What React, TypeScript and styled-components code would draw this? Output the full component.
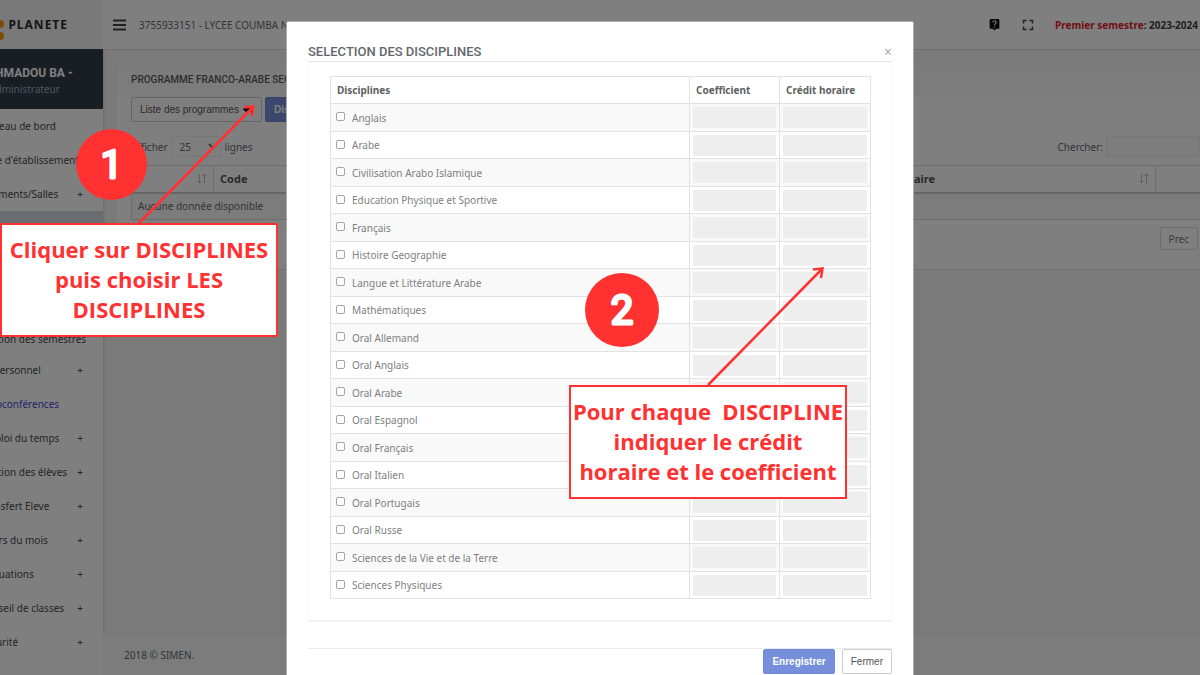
import React from "react";
import styled, { createGlobalStyle } from "styled-components";
import { MdFullscreen, MdLiveHelp } from "react-icons/md";
import { FaReply } from "react-icons/fa";

const RED = "#ff3131";
const SANS = '"Noto Sans", "Open Sans", sans-serif';

const GlobalStyle = createGlobalStyle`
  *, *::before, *::after { box-sizing: border-box; }
  body {
    margin: 0;
    font: 10px/14px ${SANS};
    color: #676a6c;
    background: #f4f4f4;
  }
  button, input, select { font: inherit; color: inherit; }
`;

const Viewport = styled.div`
  position: relative;
  min-height: 100vh;
  overflow: hidden;
`;

const Shell = styled.div`
  display: flex;
  min-height: 100vh;
  margin: 0 -40px 0 -80px;
`;

const Sidebar = styled.aside`
  flex: 0 0 183px;
  min-width: 0;
  background: #fff;
  box-shadow: 1px 0 2px rgba(0, 0, 0, 0.12);
`;

const Brand = styled.div`
  display: flex;
  align-items: center;
  justify-content: flex-end;
  gap: 4px;
  height: 49px;
  padding-right: 35px;
  background: #f2f2f2;
  color: #2b2b2b;
  font-size: 12px;
  font-weight: 700;
  letter-spacing: 1px;
`;

const Profile = styled.div`
  height: 60px;
  padding: 16px 0 0 26px;
  background: #323b48;
  line-height: 16px;
  text-align: center;
  color: #a3adb5;
`;

const ProfileName = styled.strong`
  display: block;
  font: 700 12px/16px Roboto, sans-serif;
  color: #fff;
`;

const Menu = styled.nav`
  display: flex;
  flex-direction: column;
`;

const MenuLink = styled.a<{ $active?: boolean; $accent?: boolean }>`
  display: flex;
  align-items: center;
  justify-content: space-between;
  height: 34px;
  padding: 0 20px 0 60px;
  white-space: nowrap;
  text-decoration: none;
  color: ${(p) => (p.$accent ? "#4a3fd0" : "#4a4a4a")};
  background: ${(p) => (p.$active ? "#d3dbe3" : "transparent")};
`;

const SubmenuLink = styled(MenuLink)`
  height: 28px;
`;

const Submenu = styled.div`
  display: flex;
  flex-direction: column;
  justify-content: flex-end;
  height: 108px;
`;

const Main = styled.main`
  flex: 1;
  display: flex;
  flex-direction: column;
  min-width: 0;
`;

const TopBar = styled.header`
  display: flex;
  align-items: center;
  height: 50px;
  padding: 0 42px 0 9px;
  background: #fff;
  border-bottom: 1px solid #dcdcdc;
`;

const IconButton = styled.button`
  display: flex;
  padding: 0;
  border: 0;
  background: none;
  color: #444;
`;

const School = styled.span`
  flex: 1;
  padding-left: 12px;
  white-space: nowrap;
`;

const TopTools = styled.div`
  display: flex;
  align-items: center;
  gap: 18px;
`;

const Term = styled.strong`
  color: #3e3e3e;
  font-size: 10px;
  em { color: #e21d2c; font-style: normal; }
`;

const Card = styled.section`
  margin: 15px 0 0 14px;
  background: #fff;
  border-bottom: 1px solid #e2e2e2;
`;

const CardTitle = styled.h1`
  margin: 0;
  padding: 7px 14px 9px;
  font: 500 10px/16px Roboto, sans-serif;
  color: #5a5a5a;
  background: #f8f8f8;
`;

const CardBody = styled.div`
  padding: 0 14px 19px;
`;

const Row = styled.div`
  display: flex;
  gap: 3px;
`;

const Button = styled.button<{ $primary?: boolean }>`
  display: inline-flex;
  align-items: center;
  gap: 4px;
  height: 25px;
  padding: 0 8px;
  border: 1px solid ${(p) => (p.$primary ? "#6f8ad8" : "#ccc")};
  border-radius: 2px;
  background: ${(p) => (p.$primary ? "#768fdb" : "#fff")};
  color: ${(p) => (p.$primary ? "#fff" : "#555")};
  font: ${(p) => (p.$primary ? 700 : 400)} 10px/14px "Liberation Sans", Arial, sans-serif;
  white-space: nowrap;
`;

const PageButton = styled(Button)`
  height: 23px;
  border-color: #ddd;
  color: #777;
  font-family: ${SANS};
`;

const Filters = styled.div`
  display: flex;
  justify-content: space-between;
  margin: 14px 26px 8px 0;
  label { display: flex; align-items: center; gap: 3px; }
`;

const LengthSelect = styled.select`
  width: 51px;
  height: 21px;
  padding: 0 4px;
  border: 1px solid #efefef;
  background: #fcfcfc;
`;

const SearchBox = styled.input`
  width: 94px;
  height: 21px;
  border: 1px solid #efefef;
  background: #fafafa;
`;

const DataTable = styled.table`
  width: 100%;
  border-collapse: collapse;
  table-layout: fixed;
  border: 1px solid #ddd;
  th, td { height: 27px; padding: 0 6px; text-align: left; }
  th { border: 1px solid #ddd; border-bottom: 2px solid #ccc; font-size: 11px; color: #555; }
  td { background: #f9f9f9; }
`;

const HeadCell = styled.div`
  display: flex;
  align-items: center;
  justify-content: space-between;
`;

const Pager = styled.div`
  display: flex;
  justify-content: flex-end;
  padding: 7px 28px 0 0;
`;

const Footer = styled.footer`
  margin-top: auto;
  height: 42px;
  padding: 14px 21px;
  background: #f8f8f8;
  border-top: 1px solid #ececec;
`;

const Overlay = styled.div`
  position: absolute;
  inset: 0;
  display: flex;
  justify-content: center;
  align-items: flex-start;
  padding-top: 21px;
  overflow: hidden;
  background: rgba(0, 0, 0, 0.5);
`;

const Modal = styled.section`
  position: relative;
  width: 628px;
  padding: 20px 21px 24px;
  border: 1px solid #aaa;
  border-radius: 2px;
  background: #fff;
`;

const ModalHeader = styled.header`
  display: flex;
  align-items: center;
  justify-content: space-between;
  height: 20px;
  border-bottom: 1px solid #e3e3e3;
  h2 { margin: 0; font: 500 13px/16px Roboto, sans-serif; color: #63676a; }
`;

const CloseButton = styled.button`
  padding: 0;
  border: 0;
  background: none;
  font-size: 14px;
  color: #aaa;
`;

const Well = styled.div`
  margin-bottom: 26px;
  padding: 14px 20px 21px 21px;
  border: 1px solid #fafafa;
  border-top: 0;
  border-bottom: 2px solid #f2f2f2;
`;

const SubjectTable = styled.table`
  width: 100%;
  border-collapse: collapse;
  table-layout: fixed;
  border: 1px solid #ddd;
  th, td { border: 1px solid #e2e2e2; }
  th { height: 27px; padding: 0 6px; text-align: left; font-size: 10px; color: #5c5f61; }
  td { height: 27px; padding: 0 3px; }
  tbody tr:nth-child(odd) td { height: 28px; background: #f9f9f9; }
`;

const SubjectLabel = styled.label`
  display: flex;
  align-items: center;
  gap: 7px;
  padding-left: 2px;
  color: #7d7f81;
`;

const Check = styled.input`
  appearance: none;
  width: 9px;
  height: 9px;
  margin: 0 0 2px;
  border: 1px solid #a5a5a5;
  border-radius: 2px;
  background: #fff;
`;

const ValueInput = styled.input`
  display: block;
  width: 100%;
  height: 21px;
  border: 0;
  background: #eee;
`;

const ModalFooter = styled.footer`
  display: flex;
  justify-content: flex-end;
  gap: 7px;
  border-top: 1px solid #ececec;
`;

const Note = styled.p<{ $x: number; $y: number }>`
  position: absolute;
  left: ${(p) => p.$x}px;
  top: ${(p) => p.$y}px;
  width: 278px;
  margin: 0;
  padding: 9px 0 11px;
  border: 2px solid ${RED};
  background: #fff;
  color: ${RED};
  font: 700 22px/30px "Open Sans", "Noto Sans", sans-serif;
  text-align: center;
  white-space: pre;
`;

const Mark = styled.svg<{ $x: number; $y: number }>`
  position: absolute;
  left: ${(p) => p.$x}px;
  top: ${(p) => p.$y}px;
`;

const StepBadge = ({ x, y, size, label }: { x: number; y: number; size: number; label: string }) => (
  <Mark $x={x} $y={y} width={size} height={size} viewBox="0 0 74 74">
    <circle cx="37" cy="37" r="37" fill={RED} />
    <text
      x="37"
      y="51"
      textAnchor="middle"
      fontFamily="Roboto, sans-serif"
      fontSize="40"
      fontWeight="400"
      fill="#fff"
      stroke="#fff"
      strokeWidth="3"
      strokeLinejoin="round"
    >
      {label}
    </text>
  </Mark>
);

const Arrow = ({ x, y }: { x: number; y: number }) => (
  <Mark $x={x} $y={y} width="122" height="124" viewBox="0 0 122 124" fill="none" stroke={RED} strokeWidth="2.5">
    <path d="M3 121 L117 5" />
    <path d="M108 5.5 L117.5 4.5 L116 14" />
  </Mark>
);

const SortIcon = () => (
  <svg width="10" height="11" viewBox="0 0 10 11" fill="none" stroke="#bbb" aria-hidden="true">
    <path d="M2.5 1v9M0.5 8l2 2 2-2M7.5 10V1M5.5 3l2-2 2 2" />
  </svg>
);

const menuTop = [
  { label: "Tableau de bord" },
  { label: "Type d'établissement" },
  { label: "Batiments/Salles", more: true },
];

const menuBottom = [
  { label: "Le personnel", more: true },
  { label: "Visioconférences", accent: true },
  { label: "Emploi du temps", more: true },
  { label: "Gestion des élèves", more: true },
  { label: "Transfert Eleve", more: true },
  { label: "Cours du mois", more: true },
  { label: "Evaluations", more: true },
  { label: "Conseil de classes", more: true },
  { label: "Sécurité", more: true },
];

const subjects = [
  "Anglais", "Arabe", "Civilisation Arabo Islamique", "Education Physique et Sportive",
  "Français", "Histoire Geographie", "Langue et Littérature Arabe", "Mathématiques",
  "Oral Allemand", "Oral Anglais", "Oral Arabe", "Oral Espagnol", "Oral Français",
  "Oral Italien", "Oral Portugais", "Oral Russe", "Sciences de la Vie et de la Terre",
  "Sciences Physiques",
];

const MenuItem = ({ label, more, accent }: { label: string; more?: boolean; accent?: boolean }) => (
  <MenuLink href="#" $accent={accent}>
    <span>{label}</span>
    {more && <span>+</span>}
  </MenuLink>
);

export default function App() {
  return (
    <Viewport>
      <GlobalStyle />
      <Shell>
        <Sidebar>
          <Brand>
            <svg width="16" height="32" viewBox="0 0 16 32" fill="#f59c00" aria-hidden="true">
              <circle cx="12" cy="15" r="4" />
              <circle cx="12" cy="27" r="4" />
              <circle cx="3" cy="21" r="3" />
            </svg>
            PLANETE
          </Brand>
          <Profile>
            <ProfileName>MAHMADOU BA -</ProfileName>
            Administrateur
          </Profile>
          <Menu>
            {menuTop.map((m) => <MenuItem key={m.label} {...m} />)}
            <MenuLink href="#" $active aria-label="Programmes" />
            <Submenu>
              <SubmenuLink href="#">Gestion des semestres</SubmenuLink>
            </Submenu>
            {menuBottom.map((m) => <MenuItem key={m.label} {...m} />)}
          </Menu>
        </Sidebar>
        <Main>
          <TopBar>
            <IconButton aria-label="Menu">
              <svg width="15" height="12" viewBox="0 0 15 12" stroke="currentColor" strokeWidth="2">
                <path d="M1 1.5h13M1 6h13M1 10.5h13" />
              </svg>
            </IconButton>
            <School>3755933151 - LYCEE COUMBA NDOFFENE DIOUF</School>
            <TopTools>
              <IconButton aria-label="Aide"><MdLiveHelp size={13} color="#111" /></IconButton>
              <IconButton aria-label="Plein écran"><MdFullscreen size={18} /></IconButton>
              <Term><em>Premier semestre</em>: 2023-2024</Term>
            </TopTools>
          </TopBar>
          <Card>
            <CardTitle>PROGRAMME FRANCO-ARABE SECONDAIRE</CardTitle>
            <CardBody>
              <Row>
                <Button>Liste des programmes <FaReply size={10} color="#111" /></Button>
                <Button $primary>Disciplines</Button>
              </Row>
              <Filters>
                <label>
                  Afficher
                  <LengthSelect defaultValue="25"><option>25</option></LengthSelect>
                  lignes
                </label>
                <label>Chercher: <SearchBox type="search" /></label>
              </Filters>
              <DataTable>
                <colgroup>
                  <col style={{ width: 82 }} />
                  <col />
                  <col style={{ width: 303 }} />
                  <col style={{ width: 70 }} />
                </colgroup>
                <thead>
                  <tr>
                    <th><HeadCell><span /><SortIcon /></HeadCell></th>
                    <th><HeadCell>Code<SortIcon /></HeadCell></th>
                    <th><HeadCell>Crédit horaire<SortIcon /></HeadCell></th>
                    <th />
                  </tr>
                </thead>
                <tbody>
                  <tr><td colSpan={4}>Aucune donnée disponible</td></tr>
                </tbody>
              </DataTable>
              <Pager><PageButton>Prec</PageButton></Pager>
            </CardBody>
          </Card>
          <Footer>2018 © SIMEN.</Footer>
        </Main>
      </Shell>

      <Overlay>
        <Modal role="dialog" aria-labelledby="modal-title">
          <ModalHeader>
            <h2 id="modal-title">SELECTION DES DISCIPLINES</h2>
            <CloseButton aria-label="Fermer la fenêtre">×</CloseButton>
          </ModalHeader>
          <Well>
            <SubjectTable>
              <colgroup>
                <col />
                <col style={{ width: 90 }} />
                <col style={{ width: 91 }} />
              </colgroup>
              <thead>
                <tr><th>Disciplines</th><th>Coefficient</th><th>Crédit horaire</th></tr>
              </thead>
              <tbody>
                {subjects.map((s) => (
                  <tr key={s}>
                    <td><SubjectLabel><Check type="checkbox" />{s}</SubjectLabel></td>
                    <td><ValueInput disabled aria-label={`Coefficient ${s}`} /></td>
                    <td><ValueInput disabled aria-label={`Crédit horaire ${s}`} /></td>
                  </tr>
                ))}
              </tbody>
            </SubjectTable>
          </Well>
          <ModalFooter>
            <Button $primary>Enregistrer</Button>
            <Button>Fermer</Button>
          </ModalFooter>
          <StepBadge x={298} y={251} size={74} label="2" />
          <Arrow x={418} y={242} />
          <Note $x={282} $y={363}>{"Pour chaque  DISCIPLINE\nindiquer le crédit\nhoraire et le coefficient"}</Note>
        </Modal>
      </Overlay>

      <StepBadge x={76} y={129} size={71} label="1" />
      <Arrow x={136} y={102} />
      <Note $x={0} $y={223}>{"Cliquer sur DISCIPLINES\npuis choisir LES\nDISCIPLINES"}</Note>
    </Viewport>
  );
}
